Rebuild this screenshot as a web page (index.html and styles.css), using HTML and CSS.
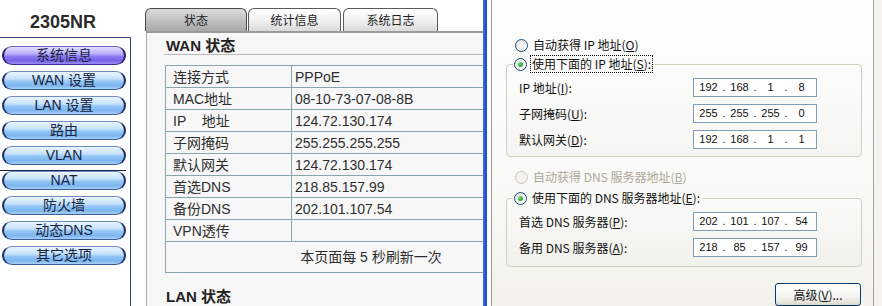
FILE: index.html
```html
<!DOCTYPE html>
<html lang="zh-CN">
<head>
<meta charset="utf-8">
<title>2305NR</title>
<link rel="stylesheet" href="styles.css">
</head>
<body>
<div class="screen">
  <div class="browser">
    <aside class="side">
      <div class="brand">2305NR</div>
      <nav class="menu">
        <a class="nav-btn active">系统信息</a>
        <a class="nav-btn">WAN 设置</a>
        <a class="nav-btn">LAN 设置</a>
        <a class="nav-btn">路由</a>
        <a class="nav-btn">VLAN</a>
        <a class="nav-btn marked">NAT</a>
        <a class="nav-btn">防火墙</a>
        <a class="nav-btn">动态DNS</a>
        <a class="nav-btn">其它选项</a>
      </nav>
    </aside>
    <main class="main">
      <div class="tabs">
        <span class="tab tab-1 active">状态</span>
        <span class="tab tab-2">统计信息</span>
        <span class="tab tab-3">系统日志</span>
      </div>
      <section class="panel">
        <h2 class="sec-title">WAN 状态</h2>
        <table class="info">
          <tr><td class="k">连接方式</td><td class="v">PPPoE</td></tr>
          <tr><td class="k">MAC地址</td><td class="v">08-10-73-07-08-8B</td></tr>
          <tr><td class="k">IP&nbsp;&nbsp;&nbsp;&nbsp;地址</td><td class="v">124.72.130.174</td></tr>
          <tr><td class="k">子网掩码</td><td class="v">255.255.255.255</td></tr>
          <tr><td class="k">默认网关</td><td class="v">124.72.130.174</td></tr>
          <tr><td class="k">首选DNS</td><td class="v">218.85.157.99</td></tr>
          <tr><td class="k">备份DNS</td><td class="v">202.101.107.54</td></tr>
          <tr><td class="k">VPN透传</td><td class="v"></td></tr>
          <tr class="note"><td colspan="2">本页面每 5 秒刷新一次</td></tr>
        </table>
        <h2 class="sec-title lan">LAN 状态</h2>
      </section>
    </main>
  </div>
  <div class="win-edge"></div>
  <div class="dialog">
    <label class="radio-row"><span class="radio"></span><span class="rtext">自动获得 IP 地址(<u>O</u>)</span></label>
    <fieldset class="group g-ip">
      <legend><label class="radio-row"><span class="radio on"></span><span class="rtext focus">使用下面的 IP 地址(<u>S</u>):</span></label></legend>
      <div class="frow"><span class="flabel">IP 地址(<u>I</u>):</span><span class="ipbox"><span class="oct">192</span><span class="dot">.</span><span class="oct">168</span><span class="dot">.</span><span class="oct">1</span><span class="dot">.</span><span class="oct">8</span></span></div>
      <div class="frow"><span class="flabel">子网掩码(<u>U</u>):</span><span class="ipbox"><span class="oct">255</span><span class="dot">.</span><span class="oct">255</span><span class="dot">.</span><span class="oct">255</span><span class="dot">.</span><span class="oct">0</span></span></div>
      <div class="frow"><span class="flabel">默认网关(<u>D</u>):</span><span class="ipbox"><span class="oct">192</span><span class="dot">.</span><span class="oct">168</span><span class="dot">.</span><span class="oct">1</span><span class="dot">.</span><span class="oct">1</span></span></div>
    </fieldset>
    <label class="radio-row disabled r-auto-dns"><span class="radio"></span><span class="rtext">自动获得 DNS 服务器地址(<u>B</u>)</span></label>
    <fieldset class="group g-dns">
      <legend><label class="radio-row"><span class="radio on"></span><span class="rtext">使用下面的 DNS 服务器地址(<u>E</u>):</span></label></legend>
      <div class="frow"><span class="flabel">首选 DNS 服务器(<u>P</u>):</span><span class="ipbox"><span class="oct">202</span><span class="dot">.</span><span class="oct">101</span><span class="dot">.</span><span class="oct">107</span><span class="dot">.</span><span class="oct">54</span></span></div>
      <div class="frow"><span class="flabel">备用 DNS 服务器(<u>A</u>):</span><span class="ipbox"><span class="oct">218</span><span class="dot">.</span><span class="oct">85</span><span class="dot">.</span><span class="oct">157</span><span class="dot">.</span><span class="oct">99</span></span></div>
    </fieldset>
    <div class="actions"><button class="xp-btn" type="button">高级(<u>V</u>)...</button></div>
  </div>
  <div class="outside"></div>
</div>
</body>
</html>
```
FILE: styles.css
```css
* { box-sizing: border-box; }
html, body { margin: 0; padding: 0; }
body {
  width: 882px;
  height: 306px;
  overflow: hidden;
  background: #ffffff;
  font-family: "Liberation Sans", "Noto Sans CJK SC", sans-serif;
}
.screen {
  display: flex;
  width: 882px;
  height: 306px;
  overflow: hidden;
}

/* ---------- left browser page ---------- */
.browser {
  display: flex;
  width: 483px;
  height: 306px;
  overflow: hidden;
  background: #ffffff;
  flex: none;
}
.side {
  width: 131px;
  flex: none;
  display: flex;
  flex-direction: column;
}
.brand {
  height: 37px;
  padding-top: 12px;
  padding-right: 5px;
  text-align: center;
  font: bold 18px/20px "Liberation Sans", Arial, sans-serif;
  color: #2b2b2b;
}
.menu {
  flex: 1;
  border-top: 1px solid #35457c;
  border-right: 1px solid #35457c;
  padding-top: 8px;
  display: flex;
  flex-direction: column;
  gap: 6px;
}
.nav-btn {
  position: relative;
  display: block;
  width: 124px;
  height: 19px;
  margin-left: 2px;
  border-style: solid;
  border-width: 1px 2px;
  border-color: #6f8cc0 #1d2c66 #3f5d9c #1d2c66;
  border-radius: 10px / 9.5px;
  background: linear-gradient(to bottom, #eaf5ff 0%, #c5e2fc 40%, #93c6f4 55%, #7cb5ef 80%, #a6d0f6 100%);
  color: #17233f;
  text-align: center;
  font-size: 14px;
  line-height: 17px;
  cursor: pointer;
}
.nav-btn.active {
  border-color: #6a62c0 #261c70 #3b3092 #261c70;
  background: linear-gradient(to bottom, #e4e0ff 0%, #b9aefc 40%, #8c7cf3 55%, #7565ea 80%, #998bf3 100%);
}
.nav-btn.marked::before {
  content: "";
  position: absolute;
  left: -4px;
  right: -2px;
  top: -2px;
  height: 1px;
  background: #1b2350;
}

.main {
  width: 352px;
  flex: none;
  display: flex;
  flex-direction: column;
  background: #ffffff;
}
.tabs {
  display: flex;
  align-items: flex-end;
  height: 31px;
  padding-left: 14px;
  padding-top: 8px;
}
.tab {
  height: 23px;
  border: 1px solid #5a5a5a;
  border-bottom: none;
  border-radius: 6px 6px 0 0;
  background: linear-gradient(to bottom, #ffffff 0%, #f2f2f2 50%, #dadada 100%);
  font: 12px/21px "Noto Sans CJK SC", sans-serif;
  color: #222;
  text-align: center;
}
.tab-1 { width: 102px; }
.tab-2 { width: 93px; margin-left: 1px; }
.tab-3 { width: 95px; margin-left: 2px; }
.tab.active {
  background: linear-gradient(to bottom, #dcdcdc 0%, #c4c4c4 45%, #a8a8a8 100%);
  border-color: #4a4a4a;
}
.panel {
  flex: 1;
  margin-left: 15px;
  border-left: 1px solid #a9a9a9;
  border-top: 2px solid #9a9a9a;
  background: #f7f7f7;
  padding-top: 5px;
  overflow: hidden;
}
.sec-title {
  margin: 0 0 0 17px;
  padding-left: 2px;
  height: 17px;
  border-bottom: 1px solid #b9b9b9;
  font: bold 15px/16px "Liberation Sans", "Noto Sans CJK SC", sans-serif;
  color: #222;
}
.sec-title.lan {
  border-bottom: none;
  margin-top: 16px;
}
.info {
  margin: 10px 0 0 18px;
  width: 412px;
  border-collapse: collapse;
  font-size: 14px;
  color: #2e2e2e;
}
.info td {
  border: 1px solid #88a6aa;
  height: 22px;
  padding: 0;
  line-height: 20px;
  white-space: nowrap;
}
.info td.k { width: 126px; padding-left: 7px; }
.info td.v { padding-left: 3px; }
.info .note td {
  height: 31px;
  text-align: center;
  padding-right: 0;
}

/* ---------- window frame between ---------- */
.win-edge {
  width: 4px;
  flex: none;
  background: linear-gradient(to right, #3b6fe0, #1647c8);
  margin-right: 4px;
}

/* ---------- XP dialog ---------- */
.dialog {
  width: 383px;
  flex: none;
  border-left: 1px solid #9a9a92;
  border-right: 1px solid #a7a69c;
  background: linear-gradient(to bottom, #fdfdfd 0%, #f9f9f6 60%, #f3f2ec 100%);
  padding: 37px 0 0 14px;
  font: 12px/16px "Noto Sans CJK SC", sans-serif;
  color: #111;
  display: flex;
  flex-direction: column;
  align-items: flex-start;
}
.outside {
  flex: 1;
  background: #f4f3ee;
}
.radio-row {
  display: flex;
  align-items: center;
  height: 16px;
  margin-left: 9px;
  white-space: nowrap;
}
.radio {
  width: 13px;
  height: 13px;
  flex: none;
  border-radius: 50%;
  border: 1px solid #1d5281;
  background: radial-gradient(circle at 65% 65%, #ffffff 0%, #f2f2ee 50%, #d8d6cb 100%);
  margin-right: 4px;
  position: relative;
}
.radio.on::after {
  content: "";
  position: absolute;
  left: 3px;
  top: 3px;
  width: 5px;
  height: 5px;
  border-radius: 50%;
  background: radial-gradient(circle at 40% 35%, #7fe07f 0%, #36b336 50%, #1a8a1a 100%);
}
.rtext { padding: 0 1px; }
.rtext.focus { outline: 1px dotted #000; outline-offset: 0; }
.radio-row.disabled { color: #aca899; }
.radio-row.disabled .radio {
  border-color: #cac8bb;
  background: #f4f3ee;
}
.group {
  margin: 3px 0 0 0;
  width: 356px;
  border: 1px solid #d0d0bf;
  border-radius: 4px;
  padding: 6px 0 7px 0;
  background: linear-gradient(to bottom, rgba(255,255,255,0.3), rgba(236,235,228,0.35));
}
.group legend {
  padding: 0 1px;
  margin-left: 6px;
}
.group legend .radio-row { margin-left: 0; }
.frow {
  display: flex;
  align-items: center;
  height: 19px;
  padding-left: 12px;
}
.frow + .frow { margin-top: 7px; }
.flabel {
  width: 174px;
  flex: none;
  white-space: nowrap;
}
.ipbox {
  display: flex;
  width: 124px;
  height: 19px;
  border: 1px solid #7f9db9;
  background: #ffffff;
  padding-left: 2px;
  font: 11px/17px "Liberation Sans", Arial, sans-serif;
  color: #111;
}
.oct { width: 25px; text-align: center; }
.dot { width: 6px; text-align: center; }
.r-auto-dns { margin-top: 12px; }
.g-dns { margin-top: 5px; padding-bottom: 9px; }
.actions {
  width: 356px;
  display: flex;
  justify-content: flex-end;
  margin-top: 16px;
}
.xp-btn {
  width: 86px;
  height: 23px;
  margin-right: 1px;
  border: 1px solid #003c74;
  border-radius: 3px;
  background: linear-gradient(to bottom, #ffffff 0%, #f4f4f0 60%, #e3e1d7 90%, #d6d0c5 100%);
  font: 12px/16px "Noto Sans CJK SC", sans-serif;
  color: #111;
  padding: 0;
}
```
